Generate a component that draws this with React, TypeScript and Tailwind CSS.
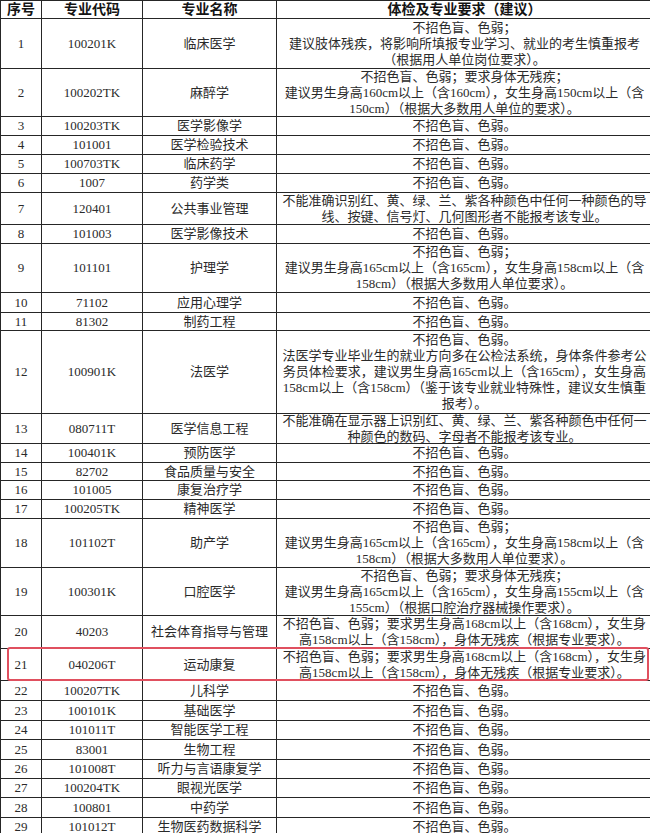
import React from "react";

type Row = { n: string; code: string; name: string; lines: string[]; h: string };

const A = "不招色盲、色弱。";

const rows: Row[] = [
  { n: "1", code: "100201K", name: "临床医学", h: "h-[50px]", lines: ["不招色盲、色弱；", "建议肢体残疾，将影响所填报专业学习、就业的考生慎重报考", "（根据用人单位岗位要求）。"] },
  { n: "2", code: "100202TK", name: "麻醉学", h: "h-[48px]", lines: ["不招色盲、色弱；要求身体无残疾；", "建议男生身高160cm以上（含160cm），女生身高150cm以上（含", "150cm）（根据大多数用人单位的要求）。"] },
  { n: "3", code: "100203TK", name: "医学影像学", h: "h-[19px]", lines: [A] },
  { n: "4", code: "101001", name: "医学检验技术", h: "h-[19px]", lines: [A] },
  { n: "5", code: "100703TK", name: "临床药学", h: "h-[19px]", lines: [A] },
  { n: "6", code: "1007", name: "药学类", h: "h-[19px]", lines: [A] },
  { n: "7", code: "120401", name: "公共事业管理", h: "h-[32px]", lines: ["不能准确识别红、黄、绿、兰、紫各种颜色中任何一种颜色的导", "线、按键、信号灯、几何图形者不能报考该专业。"] },
  { n: "8", code: "101003", name: "医学影像技术", h: "h-[19px]", lines: [A] },
  { n: "9", code: "101101", name: "护理学", h: "h-[49px]", lines: ["不招色盲、色弱；", "建议男生身高165cm以上（含165cm），女生身高158cm以上（含", "158cm）（根据大多数用人单位要求）。"] },
  { n: "10", code: "71102", name: "应用心理学", h: "h-[20px]", lines: [A] },
  { n: "11", code: "81302", name: "制药工程", h: "h-[18px]", lines: [A] },
  { n: "12", code: "100901K", name: "法医学", h: "h-[83px]", lines: ["不招色盲、色弱。", "法医学专业毕业生的就业方向多在公检法系统，身体条件参考公", "务员体检要求，建议男生身高165cm以上（含165cm），女生身高", "158cm以上（含158cm）（鉴于该专业就业特殊性，建议女生慎重", "报考）。"] },
  { n: "13", code: "080711T", name: "医学信息工程", h: "h-[30px]", lines: ["不能准确在显示器上识别红、黄、绿、兰、紫各种颜色中任何一", "种颜色的数码、字母者不能报考该专业。"] },
  { n: "14", code: "100401K", name: "预防医学", h: "h-[19px]", lines: [A] },
  { n: "15", code: "82702", name: "食品质量与安全", h: "h-[18px]", lines: [A] },
  { n: "16", code: "101005", name: "康复治疗学", h: "h-[19px]", lines: [A] },
  { n: "17", code: "100205TK", name: "精神医学", h: "h-[19px]", lines: [A] },
  { n: "18", code: "101102T", name: "助产学", h: "h-[49px]", lines: ["不招色盲、色弱；", "建议男生身高165cm以上（含165cm），女生身高158cm以上（含", "158cm）（根据大多数用人单位要求）。"] },
  { n: "19", code: "100301K", name: "口腔医学", h: "h-[48px]", lines: ["不招色盲、色弱；要求身体无残疾；", "建议男生身高165cm以上（含165cm），女生身高155cm以上（含", "155cm）（根据口腔治疗器械操作要求）。"] },
  { n: "20", code: "40203", name: "社会体育指导与管理", h: "h-[33px]", lines: ["不招色盲、色弱；要求男生身高168cm以上（含168cm），女生身", "高158cm以上（含158cm），身体无残疾（根据专业要求）。"] },
  { n: "21", code: "040206T", name: "运动康复", h: "h-[32px]", lines: ["不招色盲、色弱；要求男生身高168cm以上（含168cm），女生身", "高158cm以上（含158cm），身体无残疾（根据专业要求）。"] },
  { n: "22", code: "100207TK", name: "儿科学", h: "h-[20px]", lines: [A] },
  { n: "23", code: "100101K", name: "基础医学", h: "h-[20px]", lines: [A] },
  { n: "24", code: "101011T", name: "智能医学工程", h: "h-[19px]", lines: [A] },
  { n: "25", code: "83001", name: "生物工程", h: "h-[20px]", lines: [A] },
  { n: "26", code: "101008T", name: "听力与言语康复学", h: "h-[19px]", lines: [A] },
  { n: "27", code: "100204TK", name: "眼视光医学", h: "h-[19px]", lines: [A] },
  { n: "28", code: "100801", name: "中药学", h: "h-[20px]", lines: [A] },
  { n: "29", code: "101012T", name: "生物医药数据科学", h: "h-[19px]", lines: [A] },
];

const font = "font-['Liberation_Serif','Noto_Sans_CJK_SC',serif]";

export default function App() {
  return (
    <div className={`w-[650px] h-[833px] overflow-hidden bg-white ${font} text-[#2a2a2a]`}>
      <div className="w-[653px] border-t border-l border-[#262626]">
        <div className="grid grid-cols-[41px_101px_134px_1fr] h-[18px] border-b border-[#262626] text-[14px] leading-[16px] font-bold text-[#141414]">
          <div className="border-r border-[#262626] flex items-center justify-center">序号</div>
          <div className="border-r border-[#262626] flex items-center justify-center">专业代码</div>
          <div className="border-r border-[#262626] flex items-center justify-center">专业名称</div>
          <div className="border-r border-[#262626] flex items-center justify-center">体检及专业要求（建议）</div>
        </div>
        {rows.map((r) => (
          <div
            key={r.n}
            className={`relative grid grid-cols-[41px_101px_134px_1fr] ${r.h} border-b border-[#262626] text-[13px] leading-[16px]`}
          >
            <div className="border-r border-[#262626] flex items-center justify-center">{r.n}</div>
            <div className="border-r border-[#262626] flex items-center justify-center">{r.code}</div>
            <div className="border-r border-[#262626] flex items-center justify-center whitespace-nowrap">{r.name}</div>
            <div className="border-r border-[#262626] flex flex-col items-center justify-center overflow-hidden">
              {r.lines.map((l, i) => (
                <div key={i} className="whitespace-nowrap">{l}</div>
              ))}
            </div>
            {r.n === "21" && (
              <div className="absolute left-[6px] right-[4px] top-[-2px] bottom-[-1px] border-2 border-[#e0505f] rounded-[3px] pointer-events-none" />
            )}
          </div>
        ))}
      </div>
    </div>
  );
}
